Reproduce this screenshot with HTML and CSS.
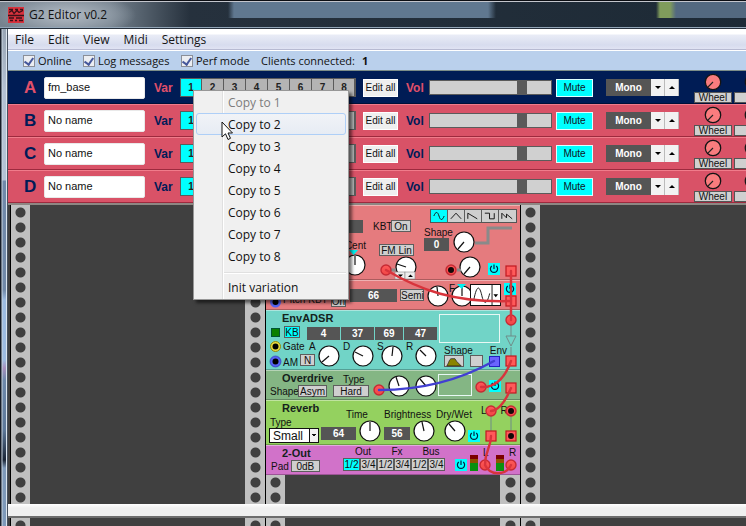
FILE: index.html
```html
<!DOCTYPE html>
<html lang="en">
<head>
<meta charset="utf-8">
<title>G2 Editor v0.2</title>
<link rel="stylesheet" href="styles.css">
</head>
<body>
<svg class="defs" aria-hidden="true">
  <defs>
    <linearGradient id="jackfill" x1="0" y1="0" x2="0" y2="1"><stop offset="0" stop-color="#ff5a5a"/><stop offset="1" stop-color="#f04545"/></linearGradient>
    <symbol id="dial" viewBox="0 0 22 22"><circle cx="11" cy="11" r="10" fill="#fff" stroke="#111" stroke-width="1.2"/></symbol>
    <symbol id="power" viewBox="0 0 12 12"><path d="M6 1.5V6M3.8 3a3.6 3.6 0 1 0 4.4 0" fill="none" stroke="#024" stroke-width="1.2"/></symbol>
    <symbol id="jack" viewBox="-6 -6 12 12"><circle r="5" fill="url(#jackfill)" stroke="#c62a34" stroke-width="1.4"/></symbol>
    <symbol id="port" viewBox="-6 -6 12 12"><rect x="-5" y="-5" width="10" height="10" fill="#ff5a5a" stroke="#c01820" stroke-width="1.2"/></symbol>
    <symbol id="wheel" viewBox="0 0 18 18"><circle cx="9" cy="9" r="7.7" fill="#f97c7e" stroke="#141414" stroke-width="1.3"/><path d="M9 9L4 14" stroke="#222" stroke-width="1.1"/></symbol>
  </defs>
</svg>

<div class="window">
  <header class="titlebar">
    <svg class="logo" viewBox="0 0 16 16" aria-hidden="true"><rect width="16" height="16" fill="#d8323c"/><path d="M0 8.500H16M1 2.500h4M7 2.500h3M12 2.500h3M1 5.500l3-2 2 3 3-3 2 2 4-2M1 11h5M8 11h6M2 13.500h3M7 13.500h2M11 13.500h4" stroke="#3b1118" stroke-width="1.300" fill="none"/></svg>
    <h1>G2 Editor v0.2</h1>
  </header>

  <main class="client">
    <nav class="menubar">
      <a href="#">File</a><a href="#">Edit</a><a href="#">View</a><a href="#">Midi</a><a href="#">Settings</a>
    </nav>
    <div class="toolbar">
      <label class="online"><input type="checkbox" checked>Online</label>
      <label class="log"><input type="checkbox" checked>Log messages</label>
      <label class="perf"><input type="checkbox" checked>Perf mode</label>
      <span>Clients connected:</span><b>1</b>
    </div>

    <section class="slots">
      <div class="slot active">
        <label class="letter" for="na">A</label><input class="name" id="na" value="fm_base">
        <span class="cap">Var</span>
        <div class="vars"><button class="on">1</button><button>2</button><button>3</button><button>4</button><button>5</button><button>6</button><button>7</button><button>8</button></div>
        <button class="edit">Edit all</button>
        <label class="cap vol" for="va">Vol</label><input class="level" id="va" type="range" value="78">
        <button class="mute">Mute</button>
        <div class="voices"><output>Mono</output><button aria-label="Down"><i class="down"></i></button><button aria-label="Up"><i class="up"></i></button></div>
        <div class="ctl"><svg><use href="#wheel"/></svg><span>Wheel</span></div><div class="ctl"><svg><use href="#wheel"/></svg><span></span></div>
      </div>
      <div class="slot">
        <label class="letter" for="nb">B</label><input class="name" id="nb" value="No name">
        <span class="cap">Var</span>
        <div class="vars"><button class="on">1</button><button>2</button><button>3</button><button>4</button><button>5</button><button>6</button><button>7</button><button>8</button></div>
        <button class="edit">Edit all</button>
        <label class="cap vol" for="vb">Vol</label><input class="level" id="vb" type="range" value="78">
        <button class="mute">Mute</button>
        <div class="voices"><output>Mono</output><button aria-label="Down"><i class="down"></i></button><button aria-label="Up"><i class="up"></i></button></div>
        <div class="ctl"><svg><use href="#wheel"/></svg><span>Wheel</span></div><div class="ctl"><svg><use href="#wheel"/></svg><span></span></div>
      </div>
      <div class="slot">
        <label class="letter" for="nc">C</label><input class="name" id="nc" value="No name">
        <span class="cap">Var</span>
        <div class="vars"><button class="on">1</button><button>2</button><button>3</button><button>4</button><button>5</button><button>6</button><button>7</button><button>8</button></div>
        <button class="edit">Edit all</button>
        <label class="cap vol" for="vc">Vol</label><input class="level" id="vc" type="range" value="78">
        <button class="mute">Mute</button>
        <div class="voices"><output>Mono</output><button aria-label="Down"><i class="down"></i></button><button aria-label="Up"><i class="up"></i></button></div>
        <div class="ctl"><svg><use href="#wheel"/></svg><span>Wheel</span></div><div class="ctl"><svg><use href="#wheel"/></svg><span></span></div>
      </div>
      <div class="slot">
        <label class="letter" for="nd">D</label><input class="name" id="nd" value="No name">
        <span class="cap">Var</span>
        <div class="vars"><button class="on">1</button><button>2</button><button>3</button><button>4</button><button>5</button><button>6</button><button>7</button><button>8</button></div>
        <button class="edit">Edit all</button>
        <label class="cap vol" for="vd">Vol</label><input class="level" id="vd" type="range" value="78">
        <button class="mute">Mute</button>
        <div class="voices"><output>Mono</output><button aria-label="Down"><i class="down"></i></button><button aria-label="Up"><i class="up"></i></button></div>
        <div class="ctl"><svg><use href="#wheel"/></svg><span>Wheel</span></div><div class="ctl"><svg><use href="#wheel"/></svg><span></span></div>
      </div>
    </section>

    <section class="rack upper">
      <div class="bay"></div>
      <div class="bay">
        <article class="module osc">
          <div class="strip tune">
            <output class="lcd"></output>
            <span>Cent</span>
            <svg class="knob"><use href="#dial"/><path d="M11 11V2"/></svg>
          </div>
          <div class="strip fm">
            <div class="row"><span>KBT</span><button>On</button></div>
            <button class="lin">FM Lin</button>
            <svg class="knob"><use href="#dial"/><path d="M11 11L2 8"/></svg>
          </div>
          <div class="strip shape">
            <div class="waves">
              <button class="on" aria-label="Sine"><svg viewBox="0 0 17 12"><path d="M3 6C5 1 7 1 8.500 6S12 11 14 6"/></svg></button>
              <button aria-label="Triangle"><svg viewBox="0 0 17 12"><path d="M3 9L8.500 3 14 9"/></svg></button>
              <button aria-label="Saw"><svg viewBox="0 0 17 12"><path d="M3 9V3L13 9"/></svg></button>
              <button aria-label="Square"><svg viewBox="0 0 17 12"><path d="M3 3H8V9H13V3"/></svg></button>
              <button aria-label="Double saw"><svg viewBox="0 0 17 12"><path d="M3 9V3L8 8V4L14 9"/></svg></button>
            </div>
            <div class="row pulse"><div class="strip"><span>Shape</span><output class="lcd">0</output></div><svg class="knob"><use href="#dial"/><path d="M11 11L5 18"/></svg></div>
            <div class="row sync"><svg class="knob"><use href="#dial"/><path d="M11 11L5 18"/></svg><button class="power" aria-label="Active"><svg><use href="#power"/></svg></button></div>
          </div>
        </article>

        <article class="module op">
          <div class="row low"><span>Pitch</span><span>KBT</span><button>On</button></div>
          <output class="lcd">66</output>
          <button class="semi">Semi</button>
          <svg class="knob"><use href="#dial"/><path d="M11 11L10 2"/></svg>
          <span class="fine">F</span>
          <svg class="knob"><use href="#dial"/><path d="M11 11V2"/></svg>
          <button class="wavepick" aria-label="Waveform"><svg viewBox="0 0 31 22"><path d="M3 16C6 0 9 0 11.500 11S17 21 20 9" fill="none" stroke="#111"/><path d="M22.500 0V22" stroke="#111"/><path d="M24 10h5l-2.500 3z"/></svg></button>
          <button class="power" aria-label="Active"><svg><use href="#power"/></svg></button>
        </article>

        <article class="module env">
          <div class="strip gate">
            <h2>EnvADSR</h2>
            <div class="row kb"><i class="lamp"></i><button class="on">KB</button></div>
            <span>Gate</span>
            <div class="row am"><span>AM</span><button>N</button></div>
          </div>
          <div class="strip stage"><output class="lcd">4</output><div class="row"><span>A</span><svg class="knob"><use href="#dial"/><path d="M11 11L4 17"/></svg></div></div>
          <div class="strip stage"><output class="lcd">37</output><div class="row"><span>D</span><svg class="knob"><use href="#dial"/><path d="M11 11L3 7"/></svg></div></div>
          <div class="strip stage narrow"><output class="lcd">69</output><div class="row"><span>S</span><svg class="knob"><use href="#dial"/><path d="M11 11L12 2"/></svg></div></div>
          <div class="strip stage"><output class="lcd">47</output><div class="row"><span>R</span><svg class="knob"><use href="#dial"/><path d="M11 11L5 5"/></svg></div></div>
          <div class="strip curve">
            <div class="graph"></div>
            <div class="row ends"><span>Shape</span><span>Env</span></div>
            <div class="row pick"><button aria-label="Curve"><svg viewBox="0 0 20 12"><path d="M2 11C4 8 5 3 7 3L11 3 13 6 18 11Z" fill="#8a8400" stroke="#222" stroke-width=".8"/></svg></button><button class="blank" aria-label="Trigger"></button></div>
          </div>
        </article>

        <article class="module drive">
          <div class="strip kind"><h2>Overdrive</h2><div class="row"><span>Shape</span><button>Asym</button></div></div>
          <div class="strip type"><span>Type</span><button>Hard</button></div>
          <svg class="knob"><use href="#dial"/><path d="M11 11L8 2"/></svg>
          <svg class="knob"><use href="#dial"/><path d="M11 11L5 4"/></svg>
          <div class="graph"></div>
          <button class="power" aria-label="Active"><svg><use href="#power"/></svg></button>
        </article>

        <article class="module reverb">
          <div class="strip room"><h2>Reverb</h2><label for="room">Type</label><select id="room"><option>Small</option></select></div>
          <div class="strip time"><span>Time</span><div class="row"><output class="lcd">64</output><svg class="knob"><use href="#dial"/><path d="M11 11V2"/></svg></div></div>
          <div class="strip bright"><span>Brightness</span><div class="row"><output class="lcd">56</output><svg class="knob"><use href="#dial"/><path d="M11 11L9 2"/></svg></div></div>
          <div class="strip mix"><span>Dry/Wet</span><div class="row"><svg class="knob"><use href="#dial"/><path d="M11 11L5 4"/></svg><button class="power" aria-label="Active"><svg><use href="#power"/></svg></button></div></div>
          <div class="row inputs"><span>L</span><span>R</span></div>
        </article>

        <article class="module out">
          <div class="strip pad"><h2>2-Out</h2><div class="row"><span>Pad</span><button>0dB</button></div></div>
          <div class="strip bus"><span>Out</span><div class="row"><button class="on">1/2</button><button>3/4</button></div></div>
          <div class="strip bus"><span>Fx</span><div class="row"><button>1/2</button><button>3/4</button></div></div>
          <div class="strip bus"><span>Bus</span><div class="row"><button>1/2</button><button>3/4</button></div></div>
          <button class="power" aria-label="Active"><svg><use href="#power"/></svg></button>
          <i class="meter"></i><span class="side">L</span><i class="meter"></i><span class="side">R</span>
        </article>

        <svg class="cables" viewBox="265 205 255 275" aria-hidden="true">
          <g fill="none" stroke="#8a8a8a" stroke-width="3"><path d="M475 243H488V228H512"/><path d="M391 270h5M457 270h4"/></g>
          <g fill="#00f0f0"><path d="M349 250h9l-4.500 5zM457 284h9l-4.500 5z"/></g>
          <g fill="none" stroke="#6f8c88"><path d="M511 325V336M511 347V356M506 336h10l-5 10zM491 416V431M511 416V431"/></g>
          <g fill="#eee" stroke="#888" stroke-width=".6"><rect x="395" y="272" width="10" height="7"/><rect x="405" y="272" width="10" height="7"/></g>
          <path d="M398 274.500h5l-2.500 2.500zM408 277h5l-2.500-2.500z"/>
          <g><circle cx="275.500" cy="302" r="5.500" fill="#5563f2"/><circle cx="275.500" cy="302" r="3"/><circle cx="275.500" cy="361.500" r="5.500" fill="#5563f2" stroke="#2a2ab0" stroke-width=".6"/><circle cx="275.500" cy="361.500" r="3"/><circle cx="275.500" cy="346.500" r="5" fill="#e8dc40" stroke="#8f8a10"/><circle cx="275.500" cy="346.500" r="3"/></g>
          <g><use href="#jack" x="380" y="264" width="12" height="12"/><use href="#jack" x="445" y="264" width="12" height="12"/><use href="#jack" x="505" y="314" width="12" height="12"/><use href="#jack" x="373" y="384" width="12" height="12"/><use href="#jack" x="475" y="381" width="12" height="12"/><use href="#jack" x="485" y="405" width="12" height="12"/><use href="#jack" x="505" y="405" width="12" height="12"/><use href="#jack" x="479" y="459" width="12" height="12"/><use href="#jack" x="505" y="459" width="12" height="12"/></g>
          <g><use href="#port" x="505" y="265" width="12" height="12"/><use href="#port" x="505" y="295" width="12" height="12"/><use href="#port" x="505" y="355" width="12" height="12"/><use href="#port" x="505" y="382" width="12" height="12"/><use href="#port" x="485" y="430" width="12" height="12"/><use href="#port" x="505" y="430" width="12" height="12"/><rect x="489.500" y="356.500" width="10" height="10" fill="#6a64ff" stroke="#2222c0"/></g>
          <g fill="#120808"><circle cx="451" cy="270" r="3"/><circle cx="511" cy="411" r="3"/><circle cx="511" cy="436" r="3"/></g>
          <g class="wire"><path d="M386 270C420 290 455 303 511 301"/><path d="M511 271V320"/><path d="M511 361C505 378 495 388 481 387"/><path d="M511 388C506 400 500 410 491 411"/><path d="M491 436C491 448 485 450 485 465C490 476 506 476 511 465"/></g>
          <path class="wire blue" d="M494 361C460 380 420 390 379 390"/>
        </svg>
      </div>
      <div class="bay"></div>
    </section>
    <div class="splitter"></div>
    <section class="rack lower"><div class="bay"></div><div class="bay"></div><div class="bay"></div></section>
  </main>

  <div class="popup" role="menu">
    <button role="menuitem" disabled>Copy to 1</button>
    <button role="menuitem" class="hot">Copy to 2</button>
    <button role="menuitem">Copy to 3</button>
    <button role="menuitem">Copy to 4</button>
    <button role="menuitem">Copy to 5</button>
    <button role="menuitem">Copy to 6</button>
    <button role="menuitem">Copy to 7</button>
    <button role="menuitem">Copy to 8</button>
    <hr>
    <button role="menuitem">Init variation</button>
  </div>
  <svg class="pointer" viewBox="0 0 13 20" aria-hidden="true"><path d="M1 1V16L4.500 12.800 7 18.500 9.500 17.300 7 12H11.500Z" fill="#fff" stroke="#111"/></svg>
</div>
</body>
</html>
```
FILE: styles.css
```css
* { box-sizing: border-box; }
body { margin: 0; height: 100vh; overflow: hidden; font-family: "Liberation Sans", Arial, sans-serif; font-size: 10px; color: #111; }
button, input, select { margin: 0; padding: 0; font: inherit; color: inherit; border-radius: 0; }
svg { display: block; overflow: visible; }
.defs { position: absolute; width: 0; height: 0; }

.window { position: relative; display: flex; flex-direction: column; height: 100%; padding-left: 8px; background: linear-gradient(90deg, #171d28 0 1px, #cbd7e3 2px, transparent 3px 6px, #dce5ee 6px 7px, #45505f 7px 8px, transparent 8px), linear-gradient(#8a97a6 0, #b4c1d2 90px, #b3c2d5 180px, #7089aa 181px, #7189a8 290px, #9dbbe0 300px, #9dbbe0 360px, #a790bd 368px, #6e89ab 380px, #5d7899 430px, #1a2536 460px, #7e99b9 468px); }
.titlebar { display: flex; align-items: center; gap: 5px; flex: none; height: 29px; margin-left: -8px; padding-left: 8px; border-top: 1px solid #0b0d12; border-bottom: 1px solid #27313d; box-shadow: inset 0 1px #c3c5cc, inset 0 -1px #93a6b8;
  background: radial-gradient(ellipse 70px 22px at 66px 14px, #b3bbc4 0, #929da8 55%, transparent 100%), linear-gradient(90deg, transparent 228px, #607890 234px 488px, transparent 496px 656px, #809c5c 660px 670px, #536980 676px) 0 0 / 100% 17px no-repeat, linear-gradient(90deg, #76828e 0, #73808c 110px, #26313d 190px, #1d2a36 100%); }
.titlebar h1 { margin: 0; font: 12px "Open Sans", sans-serif; color: #111; }
.logo { width: 16px; height: 16px; }
.client { display: flex; flex: 1; flex-direction: column; min-height: 0; background: #404040; }

.menubar { display: flex; gap: 14px; height: 21px; flex: none; padding: 0 7px; border-bottom: 1px solid #b7bad2; background: linear-gradient(#fff 0 5px, #e9ecf6 6px, #d7dcee 16px, #e0e3f3); font: 12px/21px "Open Sans", sans-serif; }
.menubar a { color: #151515; text-decoration: none; }
.toolbar { display: flex; align-items: center; flex: none; height: 21px; padding-left: 15px; border-top: 1px solid #fff; border-bottom: 1px solid #7c8d88; background: #bad0ec; font: 11px "Open Sans", sans-serif; white-space: nowrap; }
.toolbar label { display: flex; align-items: center; gap: 3px; }
.toolbar .online { width: 60px; }
.toolbar .log { width: 98px; }
.toolbar .perf { width: 80px; }
.toolbar b { margin-left: 7px; }
.toolbar input { appearance: none; width: 12px; height: 12px; border: 1px solid #8b8f98; background: #eceef2; display: grid; place-items: center; }
.toolbar input::before { content: ""; width: 4px; height: 7px; border: solid #46589c; border-width: 0 2px 2px 0; rotate: 35deg; }

.slots { flex: none; overflow: hidden; border-bottom: 2px solid #8d8783; }
.slot { display: flex; align-items: center; height: 33px; padding-left: 16px; background: #d95267; border-top: 1px solid #f07c8b; border-bottom: 1px solid #9d2a3e; color: #001b57; }
.slot > * { flex: none; }
.slot.active { background: #001c55; border-color: #001c55 #001c55 #001038; color: #e0506a; }
.letter { width: 20px; font: bold 17px "Liberation Sans", sans-serif; }
.name { width: 101px; height: 22px; padding: 0 3px 2px; border: 1px solid #e9e9e9; background: #fff; border-radius: 2px; font-size: 11px; color: #111; }
.cap { width: 26px; margin-left: 9px; font-weight: bold; font-size: 12px; }
.cap.vol { width: 23px; margin-left: 8px; }
.vars { display: flex; border: 1px solid #5b5b5b; }
.vars button { width: 22px; height: 17px; border: 0; border-right: 1px solid #5b5b5b; background: #b4b4b4; font-weight: bold; font-size: 10px; color: #222; }
.vars button:last-child, .vars button:first-child { width: 21px; }
.vars .on { background: #0ff; }
.edit { width: 35px; height: 18px; margin-left: 7px; border: 1px solid #fff; background: #efefef; color: #111; white-space: nowrap; }
.level { appearance: none; width: 123px; height: 15px; border: 1px solid #5b5b5b; background: #d0d0d0; }
.level::-webkit-slider-thumb { appearance: none; width: 10px; height: 13px; background: #5a5a5a; }
.mute { width: 37px; height: 18px; margin-left: 4px; border: 1px solid #dff; background: #0ff; color: #112; }
.voices { display: flex; height: 17px; margin: 0 15px 0 13px; }
.voices output { width: 45px; background: #555; color: #fff; font: bold 10px/17px "Liberation Sans", sans-serif; text-align: center; }
.voices button { display: grid; place-items: center; width: 14px; border: 0; border-right: 1px solid #bbb; background: #f2f2f2; }
.down, .up { border: 3px solid transparent; border-top-color: #000; border-bottom: 0; }
.up { border-top: 0; border-bottom: 3px solid #000; }
.ctl { display: flex; flex-direction: column; align-items: center; gap: 1px; margin-right: 2px; color: #111; }
.ctl svg { width: 18px; height: 18px; }
.ctl span { width: 38px; height: 11px; border: 1px solid #555; background: #d0d0d0; line-height: 9px; text-align: center; }

.rack { display: flex; overflow: hidden; padding-left: 2px; background: #404040; }
.upper { flex: 1; min-height: 0; }
.lower { flex: 0 0 10px; border-top: 2px solid #6e6e6e; }
.splitter { flex: 0 0 12px; background: linear-gradient(#fff, #f0f0f0 4px); }
.bay { position: relative; flex: 0 0 255px; min-width: 0; border-left: 1px solid #000;
  background: radial-gradient(circle at 9.500px 7.500px, #404040 4.500px, transparent 5.500px) 0 0 / 19px 15px repeat-y, radial-gradient(circle at 10.500px 7.500px, #404040 4.500px, transparent 5.500px) 100% 0 / 20px 15px repeat-y, linear-gradient(90deg, #c0c0c0 19px, #404040 19px calc(100% - 20px), #c0c0c0 calc(100% - 20px)); }

.module { display: flex; border-top: 1px solid #ffffff66; border-bottom: 1px solid #00000040; line-height: 10px; white-space: nowrap; }
.module > *, .module .row > *, .module .strip > * { flex: none; }
.module h2 { margin: 0; padding-left: 16px; font-size: 11px; line-height: 14px; color: #14221c; }
.module button { height: 12px; border: 1px solid #5d5d5d; background: #cfcfcf; line-height: 9px; text-align: center; }
.module button.on { background: #0ff; }
.module button.power { width: 12px; border: 0; background: #0ff; }
.power svg { width: 12px; height: 12px; }
.row { display: flex; }
.strip { display: flex; flex-direction: column; }
.lcd { display: block; height: 13px; background: #555; color: #fff; font: bold 10px/13px "Liberation Sans", sans-serif; text-align: center; }
.knob { width: 22px; height: 22px; }
.knob path { stroke: #111; stroke-width: 1.200; }
.graph { border: 1px solid #e8f8f4; }

.osc { height: 75px; background: #e57b7e; }
.tune { width: 100px; align-items: flex-end; padding-top: 14px; }
.tune .lcd { width: 60px; margin-right: 3px; }
.tune span { margin-top: 8px; }
.tune .knob { margin-top: 3px; }
.fm { width: 52px; padding: 14px 0 0 7px; }
.fm .row span { width: 18px; padding-top: 2px; }
.fm .row button { width: 20px; }
.module .lin { width: 35px; margin: 12px 0 0 6px; }
.fm .knob { margin-left: 22px; }
.shape { padding: 3px 0 0 12px; }
.waves { display: flex; border: 1px solid #555; }
.module .waves button { width: 17px; border-width: 0 1px 0 0; }
.module .waves button:last-child { border: 0; }
.waves path { fill: none; stroke: #111; }
.waves svg { width: 16px; height: 12px; }
.pulse { margin: 5px 0 0 -6px; }
.pulse .strip { width: 25px; margin-right: 4px; }
.pulse .knob { margin-top: 3px; }
.sync { margin: 3px 0 0 29px; gap: 7px; }
.module .sync .power { margin-top: 7px; }

.op { height: 30px; background: #e57b7e; }
.op .low { width: 84px; padding: 14px 0 0 17px; gap: 3px; }
.op .lcd { width: 47px; margin-top: 8px; }
.module .semi { width: 24px; margin: 8px 3px 0 3px; }
.op .knob { margin-top: 4px; }
.op .fine { width: 2px; padding-top: 3px; }
.module .wavepick { width: 31px; height: 22px; margin: 3px 0 0 -3px; border: 1px solid #111; background: #fff; }
.module.op .power { margin: 2px 0 0 3px; }

.env { height: 60px; background: #71d4c7; gap: 1px; }
.gate { width: 40px; }
.gate > span { padding: 4px 0 0 17px; }
.kb { gap: 4px; padding: 1px 0 0 5px; }
.kb button { width: 16px; }
.lamp { width: 9px; height: 9px; margin-top: 2px; border: 1px solid #053; background: #0a8000; }
.am { padding: 2px 0 0 17px; }
.am span { width: 17px; padding-top: 4px; }
.am button { width: 15px; }
.stage { width: 33px; padding-top: 16px; }
.stage.narrow { width: 28px; }
.stage .row { justify-content: space-between; padding-top: 5px; }
.stage span { width: 8px; margin: -3px 0 0 2px; }
.stage .knob { margin-left: -6px; }
.curve { padding: 3px 0 0 1px; }
.curve .graph { width: 61px; height: 29px; }
.ends { justify-content: space-between; width: 68px; padding: 3px 0 0 5px; }
.pick { gap: 6px; padding: 0 0 0 5px; margin-top: -1px; }
.pick button { width: 20px; }
.module .blank { width: 13px; }

.drive { height: 30px; background: #84b684; }
.kind { width: 67px; }
.kind span { width: 28px; padding: 2px 0 0 4px; }
.kind .row { gap: 4px; }
.kind button { width: 29px; }
.type { width: 55px; }
.type span { padding: 4px 0 0 10px; }
.type button { width: 36px; }
.drive .knob { margin: 4px 5px 0 0; }
.drive .knob + .knob { margin-right: 1px; }
.drive .graph { width: 34px; height: 22px; margin: 3px 17px 0 0; }
.module.drive .power { margin-top: 9px; }

.reverb { height: 45px; background: #94d15f; }
.room { width: 54px; }
.room label { padding: 3px 0 0 4px; }
.room select { appearance: none; width: 50px; height: 15px; margin-left: 3px; padding-left: 3px; border: 1px solid #111; background: linear-gradient(45deg, transparent 50%, #111 50%) 41px 5px / 3px 3px no-repeat, linear-gradient(-45deg, transparent 50%, #111 50%) 44px 5px / 3px 3px no-repeat, linear-gradient(90deg, #fff 39px, #111 39px 40px, #f2f2f2 40px); font-size: 12px; }
.reverb .row { align-items: flex-start; }
.time { width: 64px; padding-top: 9px; }
.time span { padding-left: 26px; }
.time .lcd { width: 35px; margin: 7px 3px 0 1px; }
.bright { width: 52px; padding-top: 9px; }
.bright .lcd { width: 26px; margin: 7px 3px 0 0; }
.mix { width: 44px; padding-top: 9px; }
.mix .knob { margin-left: 8px; }
.module.reverb .power { margin: 10px 0 0 2px; }
.inputs { gap: 14px; padding: 5px 0 0 1px; }

.out { height: 30px; background: #d172c9; }
.pad { width: 77px; }
.pad .row { padding-left: 5px; gap: 2px; }
.pad .row span { padding-top: 2px; }
.pad .row button { width: 29px; }
.bus { width: 34px; padding-top: 1px; }
.bus span { text-align: center; padding-left: 6px; }
.bus .row { margin-top: 1px; }
.module .bus button { width: 17px; height: 13px; }
.module.out .power { margin: 13px 3px 0 10px; }
.meter { width: 8px; height: 16px; margin-top: 9px; background: linear-gradient(#7c0000 4px, #905000 4px 8px, #0a9010 8px); }
.side { width: 18px; padding: 2px 0 0 5px; }
.cables { position: absolute; left: -1px; top: 0; width: 255px; height: 275px; }
.wire { fill: none; stroke: #d8343c; stroke-width: 2.400; stroke-linecap: round; }
.wire.blue { stroke: #413fd2; }

.popup { position: absolute; left: 193px; top: 90px; width: 156px; padding: 0 2px 1px; border: 1px solid #979797; background: linear-gradient(90deg, transparent 28px, #e0e0e0 28px 29px, #fff 29px 30px, transparent 30px), #f0f0f0; box-shadow: 3px 3px 3px #0008; font: 12px "Open Sans", sans-serif; }
.popup button { display: block; width: 100%; height: 22px; padding-left: 31px; border: 1px solid transparent; background: none; text-align: left; color: #111; }
.popup button:disabled { color: #7c7c7c; }
.popup .hot { border-color: #aecff7; border-radius: 3px; background: linear-gradient(#f1f3f7, #e7ecf4); }
.popup hr { height: 2px; margin: 5px 0 2px 28px; border: 0; border-top: 1px solid #e0e0e0; background: #fff; }
.pointer { position: absolute; left: 221px; top: 121px; width: 13px; height: 20px; }
```
